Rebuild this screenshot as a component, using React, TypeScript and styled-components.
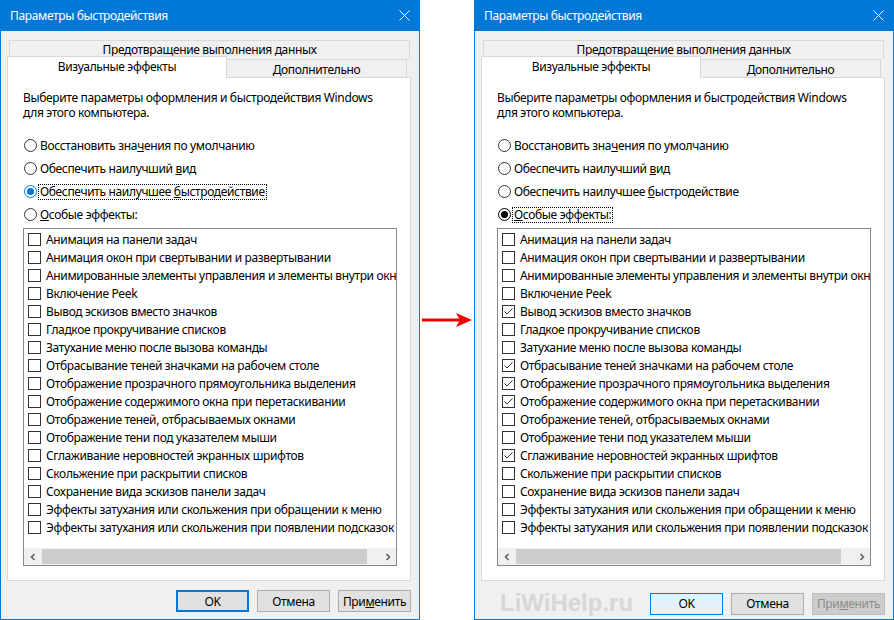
import React from 'react';
import styled, { createGlobalStyle } from 'styled-components';

const GlobalStyle = createGlobalStyle`
  html, body {
    margin: 0;
    padding: 0;
    background: #ffffff;
  }
  body {
    font-family: "Noto Sans", "Open Sans", sans-serif;
    font-size: 12px;
    letter-spacing: -0.35px;
    color: #000;
  }
`;

const Page = styled.div`
  display: flex;
  width: 894px;
  height: 620px;
  overflow: hidden;
`;

const Window = styled.div`
  box-sizing: border-box;
  width: 420px;
  height: 620px;
  border: 1px solid #0078d7;
  border-top: none;
  background: #f0f0f0;
  display: flex;
  flex-direction: column;
`;

const TitleBar = styled.div`
  height: 31px;
  background: #0078d7;
  color: #fff;
  display: flex;
  align-items: center;
  justify-content: space-between;
  padding: 0 9px 0 9px;
  font-size: 12px;
`;

const Body = styled.div`
  flex: 1;
  display: flex;
  flex-direction: column;
  padding: 9px 8px 0 6px;
`;

const TabTop = styled.div`
  height: 18px;
  margin: 0 1px 0 2px;
  border: 1px solid #d9d9d9;
  border-bottom: none;
  display: flex;
  justify-content: center;
  align-items: center;
  line-height: 18px;
`;

const TabRow = styled.div`
  display: flex;
  height: 18px;
  align-items: flex-end;
`;

const Tab = styled.div<{ $active?: boolean }>`
  box-sizing: border-box;
  display: flex;
  justify-content: center;
  align-items: center;
  border: 1px solid #d9d9d9;
  border-bottom: none;
  position: relative;
  z-index: ${p => (p.$active ? 2 : 1)};
  background: ${p => (p.$active ? '#fff' : '#f0f0f0')};
  height: ${p => (p.$active ? '22px' : '18px')};
  margin-bottom: ${p => (p.$active ? '-1px' : '0')};
  padding-bottom: ${p => (p.$active ? '3px' : '0')};
  width: ${p => (p.$active ? '220px' : '181px')};
  margin-left: ${p => (p.$active ? '0' : '-1px')};
  padding-top: ${p => (p.$active ? '0' : '1px')};
`;

const Panel = styled.div`
  box-sizing: border-box;
  height: 504px;
  width: 404px;
  background: #fff;
  border: 1px solid #d9d9d9;
  padding: 12px 14px 0 15px;
  display: flex;
  flex-direction: column;
`;

const Description = styled.div`
  line-height: 15px;
`;

const RadioGroup = styled.div`
  margin-top: 14px;
  display: flex;
  flex-direction: column;
`;

const RadioRow = styled.div`
  height: 23px;
  display: flex;
  align-items: center;
`;

const RadioCircle = styled.span<{ $checked?: boolean; $color: string }>`
  box-sizing: border-box;
  width: 13px;
  height: 13px;
  margin-left: 1px;
  border-radius: 50%;
  border: 1px solid ${p => (p.$checked ? p.$color : '#333')};
  background: #fff;
  display: flex;
  align-items: center;
  justify-content: center;
  &::after {
    content: '';
    display: ${p => (p.$checked ? 'block' : 'none')};
    width: 7px;
    height: 7px;
    border-radius: 50%;
    background: ${p => p.$color};
  }
`;

const RadioLabel = styled.span<{ $focused?: boolean }>`
  margin-left: 1px;
  padding: 0 1px;
  line-height: 14px;
  border: 1px dotted ${p => (p.$focused ? '#000' : 'transparent')};
`;

const ListBox = styled.div`
  box-sizing: border-box;
  margin-top: 2px;
  width: 374px;
  height: 338px;
  border: 1px solid #828790;
  display: flex;
  flex-direction: column;
  overflow: hidden;
`;

const ListRows = styled.div`
  padding-top: 1px;
  flex: 1;
`;

const ListRow = styled.div`
  height: 18px;
  display: flex;
  align-items: center;
  padding-left: 4px;
  white-space: nowrap;
`;

const CheckBox = styled.span`
  box-sizing: border-box;
  flex: none;
  width: 13px;
  height: 13px;
  border: 1px solid #333;
  background: #fff;
  display: flex;
  margin-right: 5px;
`;

const ScrollBar = styled.div`
  height: 17px;
  background: #f0f0f0;
  display: flex;
  align-items: center;
`;

const ScrollArrow = styled.div`
  width: 17px;
  height: 17px;
  display: flex;
  align-items: center;
  justify-content: center;
`;

const ScrollTrack = styled.div`
  flex: 1;
  height: 17px;
  display: flex;
  align-items: center;
`;

const ScrollThumb = styled.div`
  width: 325px;
  height: 15px;
  margin-left: 1px;
  background: #cdcdcd;
`;

const ButtonBar = styled.div`
  display: flex;
  align-items: center;
  margin-top: 9px;
`;

const Watermark = styled.div`
  font-family: "Liberation Sans", Arial, sans-serif;
  font-weight: bold;
  font-size: 24px;
  color: #d7d7d7;
  margin-left: 19px;
  margin-top: -1px;
  letter-spacing: 0;
`;

const Buttons = styled.div`
  display: flex;
  gap: 8px;
  margin-left: auto;
`;

type ButtonKind = 'default' | 'normal' | 'hover' | 'disabled';

const Button = styled.div<{ $kind: ButtonKind }>`
  box-sizing: border-box;
  width: 73px;
  height: 22px;
  display: flex;
  align-items: center;
  justify-content: center;
  background: ${p => (p.$kind === 'hover' ? '#e5f1fb' : p.$kind === 'disabled' ? '#cccccc' : '#e1e1e1')};
  border: ${p =>
    p.$kind === 'default'
      ? '2px solid #0078d7'
      : p.$kind === 'hover'
      ? '1px solid #0078d7'
      : p.$kind === 'disabled'
      ? '1px solid #bfbfbf'
      : '1px solid #adadad'};
  color: ${p => (p.$kind === 'disabled' ? '#8c8c8c' : '#000')};
`;

const Gap = styled.div`
  flex: 1;
  display: flex;
  align-items: center;
  justify-content: center;
  padding-top: 20px;
`;

const CloseIcon = () => (
  <svg width="11" height="11" viewBox="0 0 11 11">
    <path d="M0.5 0.5 L10.5 10.5 M10.5 0.5 L0.5 10.5" stroke="#fff" strokeWidth="1" />
  </svg>
);

const Check = () => (
  <svg width="11" height="11" viewBox="0 0 11 11">
    <polyline points="1.5,5.5 4,8 9.5,2.5" fill="none" stroke="#333" strokeWidth="1" />
  </svg>
);

const Chevron = ({ dir }: { dir: 'left' | 'right' }) => (
  <svg width="8" height="8" viewBox="0 0 8 8">
    <polyline
      points={dir === 'left' ? '5.5,1 2.5,4 5.5,7' : '2.5,1 5.5,4 2.5,7'}
      fill="none"
      stroke="#606060"
      strokeWidth="1.6"
    />
  </svg>
);

const Arrow = () => (
  <svg width="50" height="16" viewBox="0 0 50 16">
    <rect x="0" y="6.5" width="38" height="3" fill="#ee0000" />
    <path d="M50 8 L34 1 L38 8 L34 15 Z" fill="#ee0000" />
  </svg>
);

const effects = [
  'Анимация на панели задач',
  'Анимация окон при свертывании и развертывании',
  'Анимированные элементы управления и элементы внутри окна',
  'Включение Peek',
  'Вывод эскизов вместо значков',
  'Гладкое прокручивание списков',
  'Затухание меню после вызова команды',
  'Отбрасывание теней значками на рабочем столе',
  'Отображение прозрачного прямоугольника выделения',
  'Отображение содержимого окна при перетаскивании',
  'Отображение теней, отбрасываемых окнами',
  'Отображение тени под указателем мыши',
  'Сглаживание неровностей экранных шрифтов',
  'Скольжение при раскрытии списков',
  'Сохранение вида эскизов панели задач',
  'Эффекты затухания или скольжения при обращении к меню',
  'Эффекты затухания или скольжения при появлении подсказок',
];

const radios: React.ReactNode[] = [
  <>Восстановить зна<u>ч</u>ения по умолчанию</>,
  <>Обеспечить наилучший <u>в</u>ид</>,
  <>Обеспечить наилучшее <u>б</u>ыстродействие</>,
  <><u>О</u>собые эффекты:</>,
];

interface DialogProps {
  selected: number;
  radioColor: string;
  checked: number[];
  okKind: ButtonKind;
  applyKind: ButtonKind;
  watermark?: boolean;
}

const Dialog: React.FC<DialogProps> = ({ selected, radioColor, checked, okKind, applyKind, watermark }) => {
  return (
    <Window>
      <TitleBar>
        <span>Параметры быстродействия</span>
        <CloseIcon />
      </TitleBar>
      <Body>
        <TabTop>Предотвращение выполнения данных</TabTop>
        <TabRow>
          <Tab $active>Визуальные эффекты</Tab>
          <Tab>Дополнительно</Tab>
        </TabRow>
        <Panel>
          <Description>
            Выберите параметры оформления и быстродействия Windows
            <br />
            для этого компьютера.
          </Description>
          <RadioGroup>
            {radios.map((label, i) => (
              <RadioRow key={i}>
                <RadioCircle $checked={i === selected} $color={radioColor} />
                <RadioLabel $focused={i === selected}>{label}</RadioLabel>
              </RadioRow>
            ))}
          </RadioGroup>
          <ListBox>
            <ListRows>
              {effects.map((item, i) => (
                <ListRow key={i}>
                  <CheckBox>{checked.includes(i) && <Check />}</CheckBox>
                  {item}
                </ListRow>
              ))}
            </ListRows>
            <ScrollBar>
              <ScrollArrow><Chevron dir="left" /></ScrollArrow>
              <ScrollTrack><ScrollThumb /></ScrollTrack>
              <ScrollArrow><Chevron dir="right" /></ScrollArrow>
            </ScrollBar>
          </ListBox>
        </Panel>
        <ButtonBar>
          {watermark && <Watermark>LiWiHelp.ru</Watermark>}
          <Buttons>
            <Button $kind={okKind}>OK</Button>
            <Button $kind="normal">Отмена</Button>
            <Button $kind={applyKind}>При<u>м</u>енить</Button>
          </Buttons>
        </ButtonBar>
      </Body>
    </Window>
  );
};

export default function App() {
  return (
    <>
      <GlobalStyle />
      <Page>
        <Dialog selected={2} radioColor="#0078d7" checked={[]} okKind="default" applyKind="normal" />
        <Gap>
          <Arrow />
        </Gap>
        <Dialog
          selected={3}
          radioColor="#000"
          checked={[4, 7, 8, 9, 12]}
          okKind="hover"
          applyKind="disabled"
          watermark
        />
      </Page>
    </>
  );
}
